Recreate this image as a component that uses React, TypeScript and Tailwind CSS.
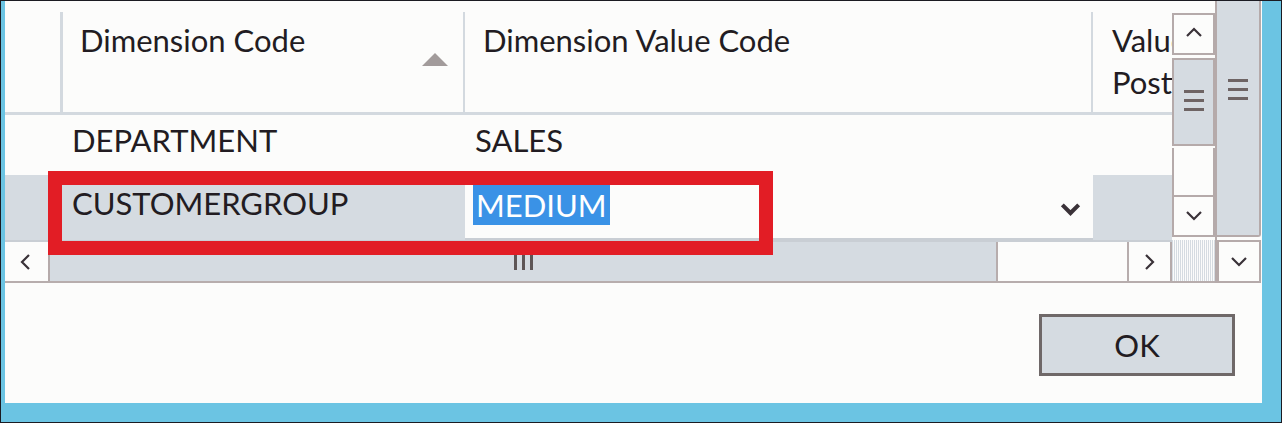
const font = "font-['Lato','Liberation_Sans',sans-serif]";

function Chevron({ dir, className }: { dir: "up" | "down" | "left" | "right"; className?: string }) {
	const points = {
		up: "2,11 9,4 16,11",
		down: "2,5 9,12 16,5",
		left: "11,2 4,9 11,16",
		right: "5,2 12,9 5,16",
	}[dir];
	return (
		<svg viewBox="0 0 18 18" className={className} fill="none" stroke="currentColor" strokeWidth={2.2}>
			<polyline points={points} />
		</svg>
	);
}

function Grip({ className }: { className?: string }) {
	return (
		<div className={`flex flex-col gap-[6px] ${className ?? ""}`}>
			<div className="h-[3px] w-[20px] bg-[#6e6464]" />
			<div className="h-[3px] w-[20px] bg-[#6e6464]" />
			<div className="h-[3px] w-[20px] bg-[#6e6464]" />
		</div>
	);
}

function ScrollButton({ dir, className }: { dir: "up" | "down" | "left" | "right"; className: string }) {
	return (
		<div className={`flex items-center justify-center bg-[#fcfcfb] border border-[#b5aaaa] text-[#3a3238] ${className}`}>
			<Chevron dir={dir} className="w-[18px] h-[18px]" />
		</div>
	);
}

export default function App() {
	return (
		<div className={`w-[1282px] h-[423px] bg-[#6bc4e3] border border-[#1b1b22] pl-[4px] pr-[19px] pb-[19px] text-[#221c22] ${font}`}>
			<div className="relative w-[1257px] h-[402px] bg-[#fcfcfb] flex flex-col">
				<div className="flex h-[282px]">
					{/* grid */}
					<div className="w-[1167px] shrink-0 flex flex-col overflow-hidden">
						<div className="h-[114px] flex flex-col border-b-[3px] border-[#d3d9df]">
							<div className="h-[11px]" />
							<div className="flex h-[100px] text-[31px] leading-[42px]">
								<div className="w-[58px] shrink-0 border-r-[3px] border-[#d3d9df]" />
								<div className="w-[402px] shrink-0 border-r-2 border-[#d3d9df] flex pl-[17px] pt-[7px] pr-[15px]">
									<span className="whitespace-nowrap">Dimension Code</span>
									<div className="ml-auto mt-[34px] w-0 h-0 border-l-[13px] border-r-[13px] border-b-[13px] border-l-transparent border-r-transparent border-b-[#a29b9b]" />
								</div>
								<div className="w-[628px] shrink-0 border-r-2 border-[#d3d9df] pl-[18px] pt-[7px] whitespace-nowrap">
									Dimension Value Code
								</div>
								<div className="w-[200px] shrink-0 pl-[19px] pt-[7px] whitespace-nowrap">
									<div>Value</div>
									<div>Posting</div>
								</div>
							</div>
						</div>
						<div className="h-[60px] flex items-start pt-[7px] text-[31px] leading-[36px]">
							<div className="w-[67px] shrink-0" />
							<div className="w-[403px] shrink-0">DEPARTMENT</div>
							<div>SALES</div>
						</div>
						<div className="h-[65px] flex text-[31px] leading-[36px] bg-[#d5dbe1]">
							<div className="w-[460px] shrink-0 pt-[10px] pl-[67px]">CUSTOMERGROUP</div>
							<div className="w-[628px] shrink-0 bg-[#fcfcfb] flex items-start pt-[10px] pl-[8px] pr-[12px] border-b-2 border-[#c9ced4]">
								<span className="inline-block bg-[#3a92e6] text-white px-[3px] leading-[40px]">MEDIUM</span>
								<Chevron dir="down" className="ml-auto mt-[14px] w-[21px] h-[21px] stroke-[3.5px] text-[#3a3238]" />
							</div>
							<div className="flex-1" />
						</div>
						<div className="h-[43px] flex border-y-2 border-[#b7adad] border-t-[#c9ced4]">
							<ScrollButton dir="left" className="w-[45px] border-0 border-r-2" />
							<div className="flex-1 bg-[#d5dbe1] flex items-center justify-center">
								<div className="flex gap-[5px]">
									<div className="w-[3px] h-[17px] bg-[#5e5656]" />
									<div className="w-[3px] h-[17px] bg-[#5e5656]" />
									<div className="w-[3px] h-[17px] bg-[#5e5656]" />
								</div>
							</div>
							<div className="w-[133px] border-x-2 border-[#b7adad]" />
							<ScrollButton dir="right" className="w-[43px] border-0 border-r-2" />
						</div>
					</div>
					{/* inner vertical scrollbar */}
					<div className="w-[43px] shrink-0 flex flex-col">
						<div className="h-[12px]" />
						<ScrollButton dir="up" className="h-[42px] border-2" />
						<div className="h-[3px]" />
						<div className="h-[88px] bg-[#d5dbe1] border-2 border-[#b5aaaa] flex justify-center pt-[30px]">
							<Grip />
						</div>
						<div className="h-[2px]" />
						<div className="h-[47px] border-x-2 border-[#b5aaaa]" />
						<ScrollButton dir="down" className="h-[42px] border-2" />
						<div className="h-[3px]" />
						<div className="h-[43px] border-b-2 border-[#b7adad] bg-[repeating-linear-gradient(90deg,#d5dbe1_0_1px,#fbfbfb_1px_2px)]" />
					</div>
					{/* outer vertical scrollbar */}
					<div className="w-[46px] shrink-0 flex flex-col border-l-2 border-[#b5aaaa]">
						<div className="h-[236px] bg-[#d5dbe1] border-b-2 border-r-2 border-[#b5aaaa] rounded-br-[3px] flex justify-center pt-[78px]">
							<Grip />
						</div>
						<div className="h-[3px]" />
						<ScrollButton dir="down" className="h-[43px] border-2" />
					</div>
				</div>
				<div className="flex-1 flex justify-end pr-[27px] pt-[31px]">
					<div className="w-[196px] h-[62px] bg-[#d5dbe1] border-[3px] border-[#6f6868] flex items-center justify-center text-[31px]">
						OK
					</div>
				</div>
				<div className="absolute left-[43px] top-[170px] w-[725px] h-[84px] border-[14px] border-[#e21d25]" />
			</div>
		</div>
	);
}
